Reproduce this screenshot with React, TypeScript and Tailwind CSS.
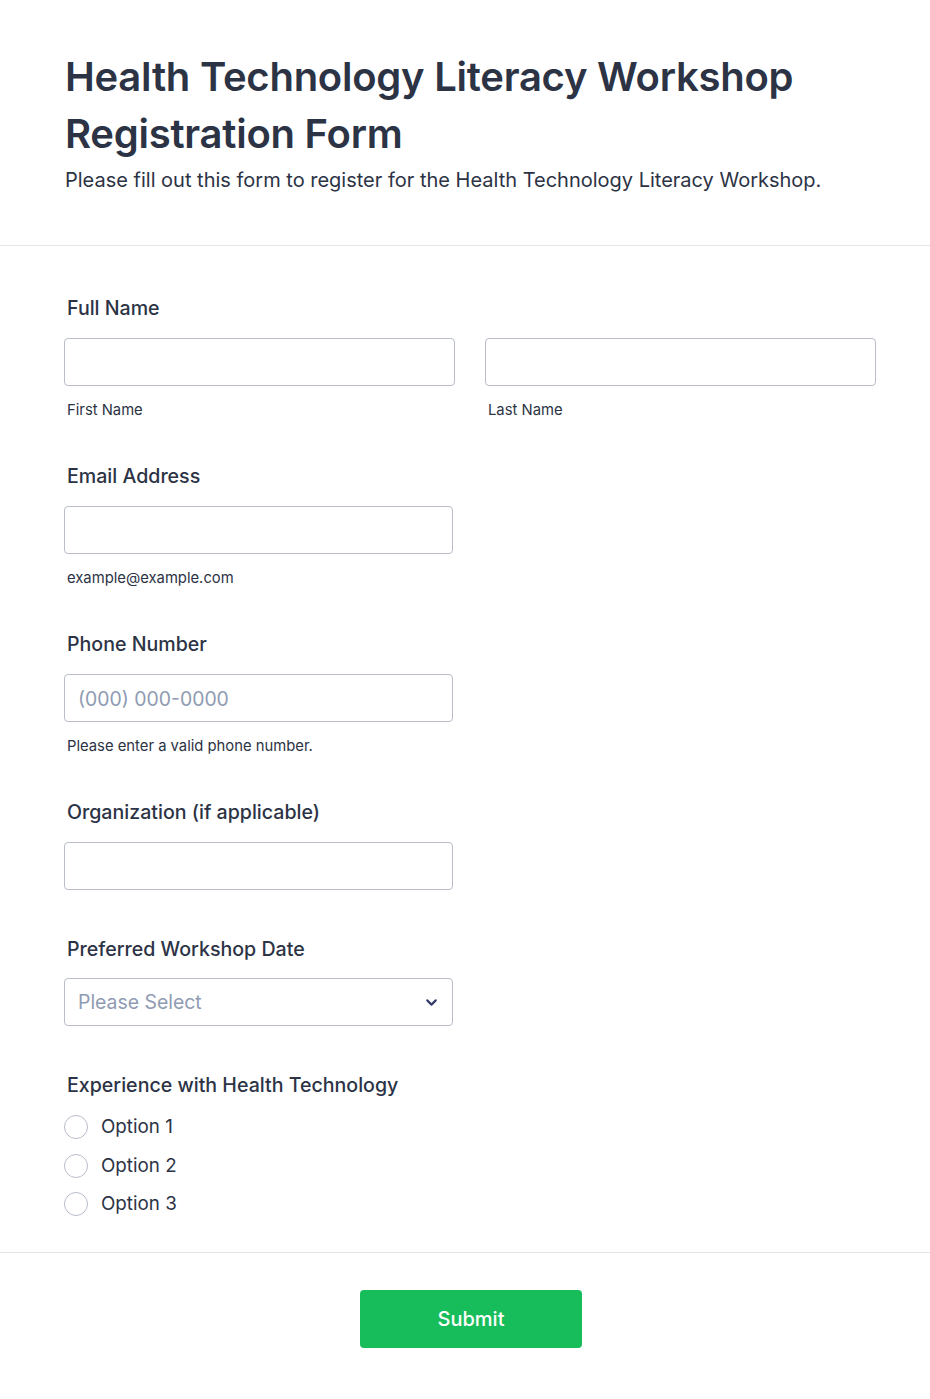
import React from "react";
import { ChevronDown } from "lucide-react";

const font = { fontFamily: "Inter, 'Noto Sans', sans-serif" };

const Label = ({ children }: { children: React.ReactNode }) => (
  <div className="px-[2px] text-[19.6px] leading-[28px] font-medium text-[#2c3345]">{children}</div>
);

const Sub = ({ children }: { children: React.ReactNode }) => (
  <div className="mt-[14px] px-[2px] text-[14.8px] leading-[20px] text-[#2c3345]">{children}</div>
);

const TextBox = ({ placeholder, wide }: { placeholder?: string; wide?: boolean }) => (
  <input
    placeholder={placeholder}
    className={`mt-4 h-12 ${wide ? "w-[391px]" : "w-[389px]"} -ml-px rounded-[4px] border border-[#b8bdc9] bg-white px-[13px] pt-px text-[19.4px] text-[#2c3345] outline-none placeholder:text-[#8f9bb2]`}
  />
);

export default function App() {
  return (
    <div style={font} className="min-h-[1399px] bg-white text-[#2c3345]">
      <header className="border-b border-[#e3e5ea] px-[65px] pt-12 pb-[51px]">
        <h1 className="text-[40px] leading-[57px] font-semibold tracking-[-0.25px] text-[#2c3345]">
          Health Technology Literacy Workshop Registration Form
        </h1>
        <p className="mt-[4px] text-[20px] leading-[28px] text-[#2c3345]">
          Please fill out this form to register for the Health Technology Literacy Workshop.
        </p>
      </header>

      <form className="border-b border-[#e3e5ea] px-[65px] pt-12 pb-9">
        <section>
          <Label>Full Name</Label>
          <div className="flex gap-[31px]">
            <div>
              <TextBox wide />
              <Sub>First Name</Sub>
            </div>
            <div>
              <TextBox wide />
              <Sub>Last Name</Sub>
            </div>
          </div>
        </section>

        <section className="mt-[42px]">
          <Label>Email Address</Label>
          <TextBox />
          <Sub>example@example.com</Sub>
        </section>

        <section className="mt-[42px]">
          <Label>Phone Number</Label>
          <TextBox placeholder="(000) 000-0000" />
          <Sub>Please enter a valid phone number.</Sub>
        </section>

        <section className="mt-[42px]">
          <Label>Organization (if applicable)</Label>
          <TextBox />
        </section>

        <section className="mt-[45px]">
          <Label>Preferred Workshop Date</Label>
          <div className="mt-[15px] -ml-px flex h-12 w-[389px] items-center justify-between rounded-[4px] border border-[#b8bdc9] pl-[13px] pr-[12px]">
            <span className="pt-px text-[19.4px] text-[#8f9bb2]">Please Select</span>
            <ChevronDown size={17} strokeWidth={3} className="text-[#343c6a]" />
          </div>
        </section>

        <section className="mt-[45px]">
          <Label>Experience with Health Technology</Label>
          <div className="mt-4 flex flex-col gap-[14.5px]">
            {["Option 1", "Option 2", "Option 3"].map((o) => (
              <label key={o} className="-ml-px flex items-center gap-[13px]">
                <span className="h-6 w-6 rounded-full border-[1.5px] border-[#b8bdc9] bg-white" />
                <span className="text-[18.8px] leading-6 text-[#2c3345]">{o}</span>
              </label>
            ))}
          </div>
        </section>
      </form>

      <div className="flex justify-center pt-[37px] pl-3">
        <button className="h-[58px] w-[222px] rounded-[4px] bg-[#18bd5b] text-[20px] font-medium text-white">
          Submit
        </button>
      </div>
    </div>
  );
}
